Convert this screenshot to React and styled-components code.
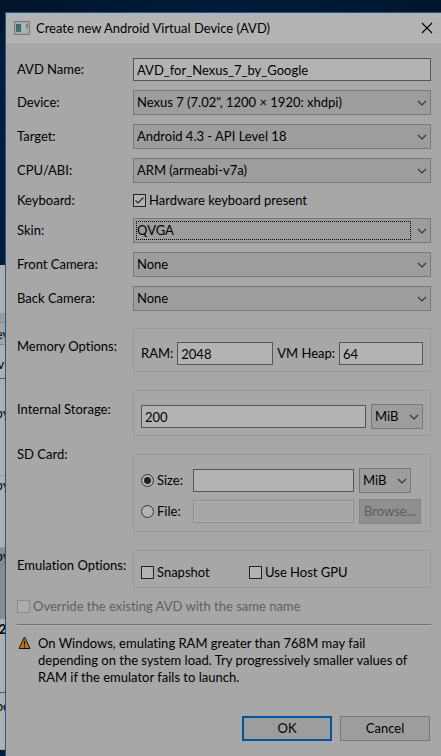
import React, { useState } from "react";
import styled, { createGlobalStyle, css } from "styled-components";

const Global = createGlobalStyle`
  *, *::before, *::after { box-sizing: border-box; }
  body { margin: 0; background: #a7a7a7; }
  body, input, select, button {
    font-family: Lato, "Noto Sans", sans-serif;
    font-size: 13px;
    line-height: 17px;
    font-variant-ligatures: none;
    color: #000;
  }
`;

const Desktop = styled.div`
  display: grid;
  grid-template-columns: 5px minmax(0, 1fr);
  grid-template-rows: 12px auto;
  min-height: 100vh;
  background: linear-gradient(90deg, #00152b, #001a38 50%, #00162e);
`;

const Behind = styled.div`
  grid-row: 1 / 3;
  padding-top: 265px;
  overflow: hidden;
  background: linear-gradient(180deg, #00152b, #001e40 100px, #001a38 265px);
`;

const Strip = styled.div`
  display: flex;
  justify-content: center;
  height: ${(p) => p.$h}px;
  padding-top: ${(p) => p.$pad || 0}px;
  overflow: hidden;
  white-space: nowrap;
  background: ${(p) => p.$bg || "#b0b0b0"};
  border-bottom: 1px solid ${(p) => p.$line || "#999"};
  font-weight: ${(p) => (p.$bold ? 700 : 400)};
`;

const Dialog = styled.main`
  grid-column: 2;
  grid-row: 2;
  display: flex;
  flex-direction: column;
  border: 1px solid #155a92;
  border-width: 1px 0 0 1px;
  background: #a7a7a7;
`;

const TitleBar = styled.header`
  display: flex;
  align-items: center;
  gap: 6px;
  height: 30px;
  padding: 0 8px;
  background: #b3b3b3;
`;

const Title = styled.h1`
  flex: 1;
  margin: 0;
  font-size: 13px;
  font-weight: 400;
  white-space: nowrap;
`;

const CloseButton = styled.button`
  display: flex;
  padding: 0;
  border: 0;
  background: none;
`;

const Form = styled.form`
  display: flex;
  flex-direction: column;
  padding: 15px 10px 14px 11px;
`;

const Row = styled.div`
  display: grid;
  grid-template-columns: 116px minmax(0, 1fr);
  align-items: ${(p) => (p.$top ? "start" : "center")};
  margin-bottom: ${(p) => p.$gap || 9}px;
`;

const labelText = css`
  white-space: nowrap;
  padding-top: ${(p) => p.$pad || 0}px;
`;
const Label = styled.label`${labelText}`;
const Caption = styled.span`${labelText}`;

const TextBox = styled.input`
  width: ${(p) => p.$w || "100%"};
  min-width: 0;
  flex: ${(p) => (p.$grow ? "1 1 0" : "none")};
  height: 23px;
  padding: 0 3px;
  border: 1px solid #555;
  border-radius: 0;
  outline: 0;
  background: #b3b3b3;
  &:disabled {
    border-color: #8f8f8f;
    background: #a7a7a7;
    box-shadow: inset 0 0 0 1px #b0b0b0;
  }
`;

const SelectFrame = styled.div`
  display: grid;
  grid-template-columns: minmax(0, 1fr) 16px;
  align-items: center;
  flex: none;
  width: ${(p) => p.$w || "100%"};
  height: 25px;
  border: 1px solid #777;
  background: #9d9d9d;
  svg { grid-area: 1 / 2; justify-self: center; pointer-events: none; }
`;

const SelectBox = styled.select`
  grid-area: 1 / 1 / 2 / 3;
  width: 100%;
  height: 23px;
  padding: 0 16px 0 3px;
  appearance: none;
  border: 0;
  outline: 0;
  background: none;
`;

const FocusRing = styled.span`
  grid-area: 1 / 1;
  height: 19px;
  margin: 0 3px 0 2px;
  border: 1px dotted #000;
  pointer-events: none;
`;

const Group = styled.div`
  display: flex;
  flex-direction: column;
  gap: 6px;
  margin-top: ${(p) => p.$mt || 0}px;
  padding: ${(p) => p.$p};
  border: 1px solid #999;
`;

const Line = styled.div`
  display: flex;
  align-items: center;
  gap: ${(p) => p.$gap || 5}px;
`;

const HalfLine = styled.div`
  display: grid;
  grid-template-columns: 108px 1fr;
`;

const CheckLabel = styled.label`
  display: flex;
  align-items: center;
  gap: 3px;
  width: ${(p) => p.$w || "auto"};
  flex: none;
  white-space: nowrap;
  color: ${(p) => (p.$off ? "#606060" : "#000")};
`;

const Tick = styled.input`
  appearance: none;
  width: 13px;
  height: 13px;
  margin: 0;
  border: 1px solid #222;
  background: #b3b3b3;
  flex: none;
  &:disabled { border-color: #8c8c8c; background: #adadad; }
  &[type="radio"] { border-radius: 50%; border-color: #333; }
  &[type="radio"]:checked {
    background: radial-gradient(circle, #222 0 3px, #b3b3b3 4px);
  }
  &[type="checkbox"]:checked {
    background: #b3b3b3 url("data:image/svg+xml,%3Csvg xmlns='http://www.w3.org/2000/svg' viewBox='0 0 11 11'%3E%3Cpath d='M1.5 5.5 4 8 9.5 2.5' fill='none' stroke='%23222' stroke-width='1.2'/%3E%3C/svg%3E");
  }
`;

const Button = styled.button`
  width: ${(p) => p.$w || "90px"};
  height: 25px;
  padding: 0;
  flex: none;
  border: ${(p) => (p.$primary ? "2px solid #00559b" : "1px solid #777")};
  background: #9d9d9d;
  &:disabled { border-color: #858585; background: #8f8f8f; color: #5c5c5c; }
`;

const Divider = styled.hr`
  width: 100%;
  height: 2px;
  margin: 9px 0 9px;
  border: 0;
  border-top: 1px solid #717171;
  background: #b3b3b3;
`;

const Notice = styled.div`
  display: grid;
  grid-template-columns: 13px minmax(0, 1fr);
  gap: 7px;
  padding: 0 5px 0 1px;
  p { margin: 0; }
  svg { margin-top: 1px; }
`;

const Actions = styled.footer`
  display: flex;
  justify-content: flex-end;
  gap: 8px;
  padding: 30px 1px 0 0;
`;

const Arrow = () => (
  <svg width="10" height="6" viewBox="0 0 10 6" fill="none" stroke="#333" strokeWidth="1.1">
    <path d="M1 1l4 4 4-4" />
  </svg>
);

function Select({ id, value, width, focused, label }) {
  return (
    <SelectFrame $w={width}>
      <SelectBox id={id} aria-label={label} defaultValue={value}>
        <option>{value}</option>
      </SelectBox>
      {focused && <FocusRing />}
      <Arrow />
    </SelectFrame>
  );
}

function SelectRow({ id, label, value, focused }) {
  return (
    <Row>
      <Label htmlFor={id}>{label}</Label>
      <Select id={id} value={value} focused={focused} />
    </Row>
  );
}

export default function App() {
  const [source, setSource] = useState("size");
  return (
    <>
      <Global />
      <Desktop>
        <Behind aria-hidden="true">
          <Strip $h={49} $line="#999" />
          <Strip $h={9} $bg="#9c9c9c" $line="#888" />
          <Strip $h={22} $pad={3} $bg="#a4a4a4" $line="#888">ev</Strip>
          <Strip $h={34} $pad={11} $line="#555560">vi</Strip>
          <Strip $h={97} $pad={26}>by</Strip>
          <Strip $h={72} $pad={1}>by</Strip>
          <Strip $h={71} $bg="#8a8a8a" $line="#8a8a8a">by</Strip>
          <Strip $h={74} $pad={2} $line="#555560" $bold>2</Strip>
          <Strip $h={57} $pad={5}>oc</Strip>
        </Behind>
        <Dialog>
          <TitleBar>
            <svg width="16" height="14" viewBox="0 0 16 14">
              <rect x="0.5" y="0.5" width="15" height="13" fill="#aaa" stroke="#777" />
              <rect x="2" y="3" width="5" height="8" fill="#427465" />
              <path d="M2 3h5v3l-5 2z" fill="#3f6480" />
              <path d="M8 3h3v8H8z" fill="#b5b5b5" />
              <path d="M12 3h2v4h-2z" fill="#6f8490" />
              <path d="M12 7h2v4h-2z" fill="#aab1aa" />
            </svg>
            <Title>Create new Android Virtual Device (AVD)</Title>
            <CloseButton aria-label="Close">
              <svg width="12" height="12" viewBox="0 0 12 12" stroke="#000" strokeWidth="1.1">
                <path d="M1 1l10 10M11 1L1 11" />
              </svg>
            </CloseButton>
          </TitleBar>
          <Form onSubmit={(e) => e.preventDefault()}>
            <Row>
              <Label htmlFor="name">AVD Name:</Label>
              <TextBox id="name" defaultValue="AVD_for_Nexus_7_by_Google" />
            </Row>
            <SelectRow id="device" label="Device:" value={'Nexus 7 (7.02", 1200 × 1920: xhdpi)'} />
            <SelectRow id="target" label="Target:" value="Android 4.3 - API Level 18" />
            <SelectRow id="cpu" label="CPU/ABI:" value="ARM (armeabi-v7a)" />
            <Row>
              <Caption>Keyboard:</Caption>
              <CheckLabel><Tick type="checkbox" defaultChecked />Hardware keyboard present</CheckLabel>
            </Row>
            <SelectRow id="skin" label="Skin:" value="QVGA" focused />
            <SelectRow id="front" label="Front Camera:" value="None" />
            <SelectRow id="back" label="Back Camera:" value="None" />

            <Row $top $gap={18}>
              <Caption $pad={18}>Memory Options:</Caption>
              <Group $mt={8} $p="13px 7px 6px">
                <Line $gap={4}>
                  <Label htmlFor="ram">RAM:</Label>
                  <TextBox id="ram" defaultValue="2048" $w="96px" />
                  <Label htmlFor="heap">VM Heap:</Label>
                  <TextBox id="heap" defaultValue="64" $grow />
                </Line>
              </Group>
            </Row>
            <Row $top $gap={10}>
              <Label htmlFor="storage" $pad={11}>Internal Storage:</Label>
              <Group $p="13px 7px 6px">
                <Line>
                  <TextBox id="storage" defaultValue="200" $grow />
                  <Select value="MiB" width="52px" label="Storage unit" />
                </Line>
              </Group>
            </Row>
            <Row $top $gap={18}>
              <Caption>SD Card:</Caption>
              <Group $mt={8} $p="13px 7px 7px">
                <Line>
                  <CheckLabel $w="47px">
                    <Tick type="radio" name="sd" checked={source === "size"} onChange={() => setSource("size")} />Size:
                  </CheckLabel>
                  <TextBox aria-label="SD card size" $w="161px" />
                  <Select value="MiB" width="52px" label="SD card unit" />
                </Line>
                <Line>
                  <CheckLabel $w="47px">
                    <Tick type="radio" name="sd" checked={source === "file"} onChange={() => setSource("file")} />File:
                  </CheckLabel>
                  <TextBox aria-label="SD card file" $w="161px" disabled={source !== "file"} />
                  <Button type="button" $w="62px" disabled={source !== "file"}>Browse...</Button>
                </Line>
              </Group>
            </Row>
            <Row $top $gap={10}>
              <Caption $pad={7}>Emulation Options:</Caption>
              <Group $p="13px 7px 6px">
                <HalfLine>
                  <CheckLabel><Tick type="checkbox" />Snapshot</CheckLabel>
                  <CheckLabel><Tick type="checkbox" />Use Host GPU</CheckLabel>
                </HalfLine>
              </Group>
            </Row>
            <CheckLabel $off><Tick type="checkbox" disabled />Override the existing AVD with the same name</CheckLabel>
            <Divider />
            <Notice>
              <svg width="13" height="14" viewBox="0 0 13 14">
                <path d="M6.5 1L12 12.5H1z" fill="#bd7613" stroke="#17120c" />
                <path d="M6.5 5v4M6.5 10v1.4" stroke="#111" strokeWidth="1.2" />
              </svg>
              <p>On Windows, emulating RAM greater than 768M may fail depending on the system load. Try progressively smaller values of RAM if the emulator fails to launch.</p>
            </Notice>
            <Actions>
              <Button type="submit" $primary>OK</Button>
              <Button type="button">Cancel</Button>
            </Actions>
          </Form>
        </Dialog>
      </Desktop>
    </>
  );
}
